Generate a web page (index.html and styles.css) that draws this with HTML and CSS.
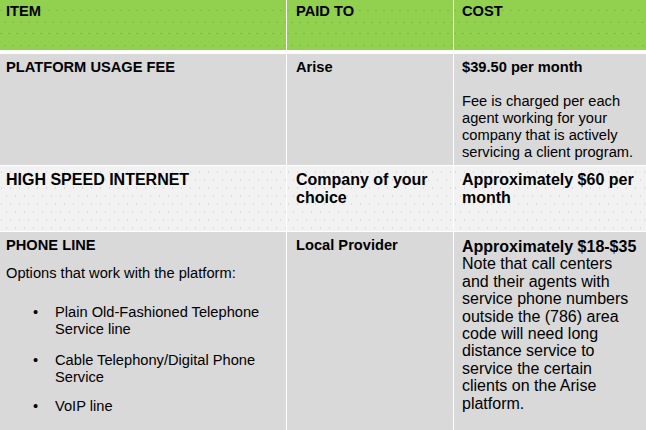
FILE: index.html
```html
<!DOCTYPE html>
<html lang="en">
<head>
<meta charset="utf-8">
<title>Costs</title>
<link rel="stylesheet" href="styles.css">
</head>
<body>
<div class="table">
  <div class="row head">
    <div class="cell c1"><b>ITEM</b></div>
    <div class="cell c2"><b>PAID TO</b></div>
    <div class="cell c3"><b>COST</b></div>
  </div>
  <div class="row r1">
    <div class="cell c1"><b>PLATFORM USAGE FEE</b></div>
    <div class="cell c2"><b>Arise</b></div>
    <div class="cell c3">
      <p class="line"><b>$39.50 per month</b></p>
      <p class="para">Fee is charged per each agent working for your company that is actively servicing a client program.</p>
    </div>
  </div>
  <div class="row r2">
    <div class="cell c1 big"><b>HIGH SPEED INTERNET</b></div>
    <div class="cell c2 big"><b>Company of your choice</b></div>
    <div class="cell c3 big"><b>Approximately $60 per month</b></div>
  </div>
  <div class="row r3">
    <div class="cell c1">
      <p class="line"><b>PHONE LINE</b></p>
      <p class="options">Options that work with the platform:</p>
      <ul class="bullets">
        <li class="item-a"><span class="dot">•</span><span>Plain Old-Fashioned Telephone Service line</span></li>
        <li class="item-b"><span class="dot">•</span><span>Cable Telephony/Digital Phone Service</span></li>
        <li><span class="dot">•</span><span>VoIP line</span></li>
      </ul>
    </div>
    <div class="cell c2"><b>Local Provider</b></div>
    <div class="cell c3 note"><b>Approximately $18-$35</b><br>Note that call centers and their agents with service phone numbers outside the (786) area code will need long distance service to service the certain clients on the Arise platform.</div>
  </div>
</div>
</body>
</html>
```
FILE: styles.css
```css
html, body {
  margin: 0;
  padding: 0;
  background: #ffffff;
}
body {
  font-family: "Liberation Sans", Arial, sans-serif;
  color: #000000;
  font-size: 14.67px;
  line-height: 17px;
}
.table {
  width: 646px;
  height: 430px;
  overflow: hidden;
  display: flex;
  flex-direction: column;
  gap: 1px;
  background: #ffffff;
}
.row {
  display: grid;
  grid-template-columns: 286px 166px 192px;
  column-gap: 1px;
  flex: none;
}
.cell {
  padding: 5px 7px 0 6px;
  box-sizing: border-box;
}
.cell.c2 { padding-left: 9px; }
.cell.c3 { padding-left: 8px; }
.head { height: 50px; margin-bottom: 3px; }
.head .cell {
  padding-top: 3px;
  background-color: #92d050;
  background-image:
    radial-gradient(circle, rgba(60, 110, 20, 0.22) 0.5px, transparent 0.85px),
    radial-gradient(circle, rgba(60, 110, 20, 0.22) 0.5px, transparent 0.85px);
  background-size: 8px 23px, 8px 23px;
  background-position: 1px 11px, 5px 22px;
}
.r1 { height: 111px; }
.r1 .cell { background: #d9d9d9; }
.r2 { height: 65px; }
.r2 .cell {
  background-color: #f2f2f2;
  background-image:
    radial-gradient(circle, rgba(0, 0, 0, 0.09) 0.5px, transparent 0.85px),
    radial-gradient(circle, rgba(0, 0, 0, 0.09) 0.5px, transparent 0.85px);
  background-size: 9px 16px, 9px 16px;
  background-position: 2px 6px, 6px 14px;
}
.r3 { flex: 1 1 auto; }
.r3 .cell { background: #d9d9d9; }
.big {
  font-size: 16px;
  line-height: 18px;
}
p { margin: 0; }
.para { margin-top: 17px; }
.options { margin-top: 11px; }
.bullets {
  list-style: none;
  margin: 22px 0 0 0;
  padding: 0;
  line-height: 16.7px;
}
.bullets li {
  display: flex;
}
.bullets .item-a { margin-bottom: 14.6px; }
.bullets .item-b { margin-bottom: 12.6px; }
.bullets .dot {
  width: 22px;
  padding-left: 27px;
  flex: none;
}
.note {
  font-size: 16px;
  line-height: 17.4px;
}
.r3 .cell.note { padding-top: 6px; }
```
